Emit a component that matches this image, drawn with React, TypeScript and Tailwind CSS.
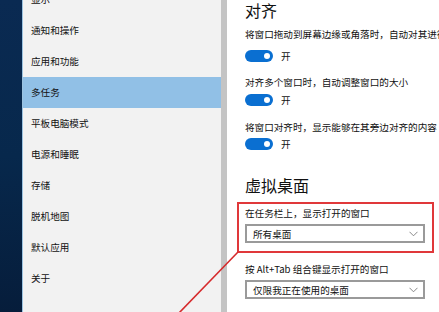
import React from "react";

const font = { fontFamily: '"Noto Sans CJK SC", "Noto Sans", sans-serif' };

const navItems = [
  "显示",
  "通知和操作",
  "应用和功能",
  "多任务",
  "平板电脑模式",
  "电源和睡眠",
  "存储",
  "脱机地图",
  "默认应用",
  "关于",
];

function Toggle() {
  return (
    <div className="flex items-center h-[14px]">
      <div className="relative w-[28px] h-[12px] rounded-full bg-[#0a6fd1]">
        <div className="absolute right-[3px] top-[3px] w-[6px] h-[6px] rounded-full bg-white" />
      </div>
      <span className="ml-[8px] text-[9.6px] leading-[14px] text-[#111]">开</span>
    </div>
  );
}

function Select({ value }: { value: string }) {
  return (
    <div className="flex items-center justify-between w-[180px] h-[19px] border-2 border-[#9a9a9a] bg-white pl-[6px] pr-[5px]">
      <span className="text-[9.6px] leading-[14px] text-[#111]">{value}</span>
      <svg width="9" height="6" viewBox="0 0 9 6" fill="none">
        <path d="M0.5 0.8 L4.5 4.8 L8.5 0.8" stroke="#7a7a7a" strokeWidth="0.9" />
      </svg>
    </div>
  );
}

export default function App() {
  return (
    <div
      className="relative flex w-[439px] h-[312px] overflow-hidden bg-white"
      style={font}
    >
      {/* desktop strip */}
      <div className="w-[22px] shrink-0 h-full bg-gradient-to-b from-[#0a2a52] via-[#07284c] to-[#061d3b]" />
      <div className="w-[1px] shrink-0 h-full bg-[#9cc3e0]" />
      {/* nav */}
      <div className="w-[198px] shrink-0 h-[330px] bg-[#f2f2f2] flex flex-col mt-[-16px]">
        {navItems.map((t) => (
          <div
            key={t}
            className={`h-[31px] shrink-0 flex items-center pl-[8px] text-[9.6px] text-[#111] ${
              t === "多任务" ? "bg-[#91c0e6]" : ""
            }`}
          >
            {t}
          </div>
        ))}
      </div>
      {/* scrollbar strip */}
      <div className="w-[6px] shrink-0 h-full bg-[#c4c4c4]" />
      {/* content */}
      <div className="flex-1 min-w-0 overflow-hidden h-full flex flex-col pl-[18px] text-[#111]">
        <div className="h-[20px] text-[16px] leading-[20px]">对齐</div>
        <div className="h-[14px] mt-[7px] text-[9.6px] leading-[14px] whitespace-nowrap">
          将窗口拖动到屏幕边缘或角落时，自动对其进行排列
        </div>
        <div className="mt-[8px]">
          <Toggle />
        </div>
        <div className="h-[14px] mt-[12px] text-[9.6px] leading-[14px] whitespace-nowrap">
          对齐多个窗口时，自动调整窗口的大小
        </div>
        <div className="mt-[4px]">
          <Toggle />
        </div>
        <div className="h-[14px] mt-[13px] text-[9.6px] leading-[14px] whitespace-nowrap">
          将窗口对齐时，显示能够在其旁边对齐的内容
        </div>
        <div className="mt-[3px]">
          <Toggle />
        </div>
        <div className="h-[20px] mt-[24px] text-[16px] leading-[20px]">虚拟桌面</div>
        <div className="h-[14px] mt-[11px] text-[9.6px] leading-[14px] whitespace-nowrap">
          在任务栏上，显示打开的窗口
        </div>
        <div className="mt-[4px]">
          <Select value="所有桌面" />
        </div>
        <div className="h-[14px] mt-[19px] text-[9.6px] leading-[14px] whitespace-nowrap">
          按 Alt+Tab 组合键显示打开的窗口
        </div>
        <div className="mt-[4px]">
          <Select value="仅限我正在使用的桌面" />
        </div>
      </div>

      {/* annotation overlay */}
      <div className="absolute left-[237px] top-[202px] w-[197px] h-[51px] border-2 border-[#e0383a] pointer-events-none" />
      <svg
        className="absolute left-0 top-0 pointer-events-none"
        width="439"
        height="312"
      >
        <line x1="238" y1="252" x2="179" y2="313" stroke="#d62a2c" strokeWidth="1.6" />
      </svg>
    </div>
  );
}
